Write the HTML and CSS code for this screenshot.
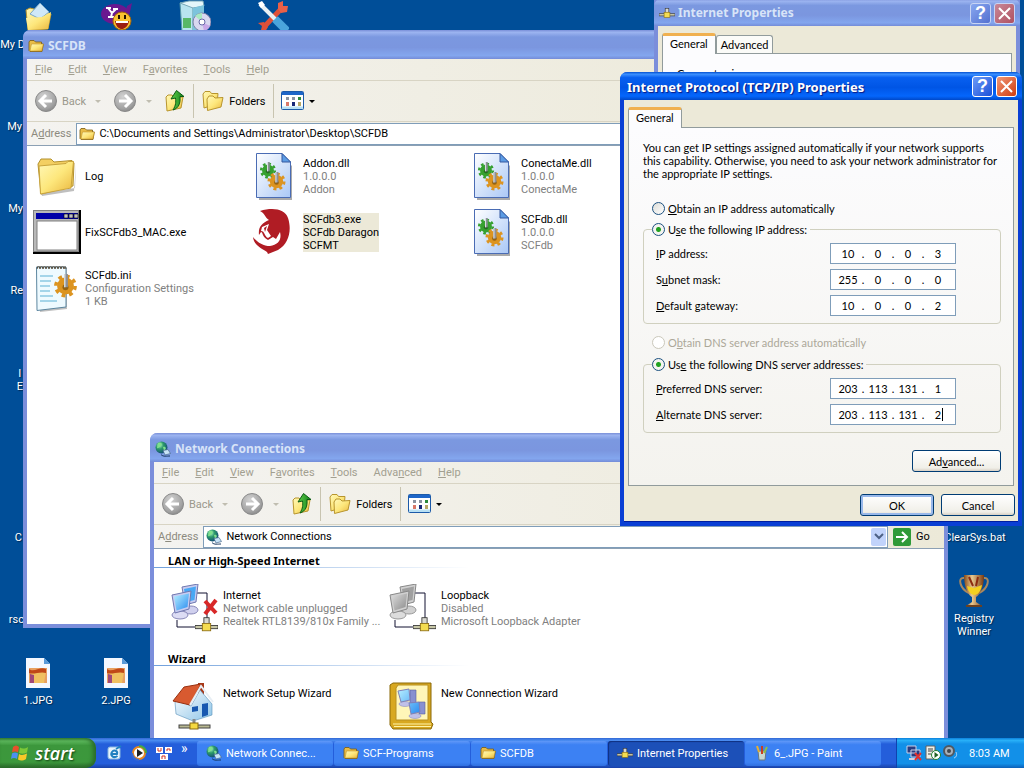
FILE: index.html
```html
<!DOCTYPE html>
<html lang="en">
<head>
    <meta charset="UTF-8">
    <meta name="viewport" content="width=device-width, initial-scale=1.0">
    <title>Desktop</title>
    <link rel="stylesheet" href="styles.css">
</head>
<body>
    <!-- shared icons -->
    <svg class="sprite" width="0" height="0" aria-hidden="true">
        <defs>
            <linearGradient id="gFolder" x1="0" y1="0" x2="1" y2="1">
                <stop offset="0" stop-color="#fff8b8"/>
                <stop offset="0.5" stop-color="#fde77c"/>
                <stop offset="1" stop-color="#e9b53c"/>
            </linearGradient>
            <linearGradient id="gPage" x1="0" y1="0" x2="1" y2="1">
                <stop offset="0" stop-color="#ffffff"/>
                <stop offset="1" stop-color="#aac8f6"/>
            </linearGradient>
            <linearGradient id="gScreen" x1="0" y1="0" x2="1" y2="1">
                <stop offset="0" stop-color="#b8f0ff"/>
                <stop offset="1" stop-color="#2a8cf0"/>
            </linearGradient>
            <linearGradient id="gGrey" x1="0" y1="0" x2="1" y2="1">
                <stop offset="0" stop-color="#dcdcdc"/>
                <stop offset="1" stop-color="#8c8c8c"/>
            </linearGradient>
            <linearGradient id="gUp" x1="0" y1="0" x2="1" y2="0">
                <stop offset="0" stop-color="#5fd04a"/>
                <stop offset="1" stop-color="#14801a"/>
            </linearGradient>
            <linearGradient id="gWall" x1="0" y1="0" x2="1" y2="1">
                <stop offset="0" stop-color="#ffffff"/>
                <stop offset="1" stop-color="#8cc4e8"/>
            </linearGradient>
            <linearGradient id="gCup" x1="0" y1="0" x2="1" y2="0">
                <stop offset="0" stop-color="#8a4b18"/>
                <stop offset="0.4" stop-color="#e8c890"/>
                <stop offset="1" stop-color="#7a3a10"/>
            </linearGradient>
            <radialGradient id="gNav" cx="0.4" cy="0.3" r="0.8">
                <stop offset="0" stop-color="#d2d2d2"/>
                <stop offset="0.7" stop-color="#a2a2a2"/>
                <stop offset="1" stop-color="#808080"/>
            </radialGradient>
            <radialGradient id="gGlobe" cx="0.35" cy="0.3" r="0.8">
                <stop offset="0" stop-color="#a8f0c8"/>
                <stop offset="0.4" stop-color="#2c9a6a"/>
                <stop offset="1" stop-color="#0c3c78"/>
            </radialGradient>

            <symbol id="folder" viewBox="0 0 16 16">
                <path d="M1 4 L2 2.500 H6 L7.500 4 H13.500 V6 H15.300 L14 13.500 H2 L1 12.500Z" fill="#e8bc48" stroke="#7a5a10" stroke-width="0.800"/>
                <path d="M3.500 6 H15.300 L13.800 13 H2Z" fill="url(#gFolder)" stroke="#b88a20" stroke-width="0.500"/>
            </symbol>
            <symbol id="folder-large" viewBox="0 0 48 48">
                <path d="M8 41 L42 36 L43 12 L41 39 L9 44Z" fill="#00000040"/>
                <path d="M5 12 L8 7 L18 7 L21 10 L39 8.500 L41 11 L40 34 L8 42Z" fill="#f3cf62" stroke="#b3912e"/>
                <path d="M6 14 L33 11.500 L35 9.500 L40.500 9.500 L38 36 L7.500 42Z" fill="url(#gFolder)" stroke="#c9a43c"/>
            </symbol>
            <symbol id="folders" viewBox="0 0 24 22">
                <path d="M2 4 L4 1.500 H9 L10.500 3.500 H17 L16 14 L3 18Z" fill="url(#gFolder)" stroke="#b8952e"/>
                <path d="M6 9 L8 6 H12 L14 8 L22 7.500 L20 17 L6.500 20.500Z" fill="url(#gFolder)" stroke="#b8952e"/>
            </symbol>
            <symbol id="up" viewBox="0 0 22 24">
                <path d="M2 8 L4 6 H8 L10 8 L19 8 L17 19 L3 22Z" fill="url(#gFolder)" stroke="#b8952e"/>
                <path d="M12.500 1.500 L20 7.500 H16 C16.500 14 15 19 9 21 C12 16 12 13 11.500 9 L7 10Z" fill="url(#gUp)" stroke="#0c5c14"/>
            </symbol>
            <symbol id="nav-back" viewBox="0 0 24 24">
                <circle cx="12" cy="12" r="10.500" fill="url(#gNav)" stroke="#8a8a8a"/>
                <path d="M12 6 L6 12 L12 18 M6.500 12 H18" fill="none" stroke="#fff" stroke-width="3"/>
            </symbol>
            <symbol id="nav-fwd" viewBox="0 0 24 24">
                <circle cx="12" cy="12" r="10.500" fill="url(#gNav)" stroke="#8a8a8a"/>
                <path d="M12 6 L18 12 L12 18 M17.500 12 H6" fill="none" stroke="#fff" stroke-width="3"/>
            </symbol>
            <symbol id="views" viewBox="0 0 24 20">
                <rect x="0.500" y="0.500" width="22" height="18" rx="1" fill="#fff" stroke="#1c5aa8"/>
                <rect x="1" y="1" width="21" height="3" fill="#1e66c8"/>
                <path d="M1 15.500 H22 V18 H1Z" fill="#b8e0f4"/>
                <path d="M5 6h3v3h-3z M11 6h3v3h-3z" fill="#8a93a0"/>
                <path d="M17 6h3v3h-3z" fill="#2c8a3c"/>
                <path d="M5 11h3v4h-3z" fill="#d87868"/>
                <path d="M11 11h3v4h-3z" fill="#182878"/>
                <path d="M17 11h3v4h-3z" fill="#b8a868"/>
            </symbol>
            <symbol id="globe" viewBox="0 0 16 16">
                <circle cx="6.500" cy="6.500" r="6" fill="url(#gGlobe)"/>
                <path d="M3 2 C6 1 8 3 6 5 C4 6 3 8 2 7Z M8 6 C11 5 12 8 9 10Z" fill="#7fe08c"/>
                <path d="M8 9.500 L13 8.500 L15.500 12.500 L10 14Z" fill="#c8e4f8" stroke="#48688c" stroke-width="0.700"/>
                <path d="M6 13.500 C8 16 12 15 15 15" stroke="#183860" fill="none"/>
            </symbol>
            <symbol id="gear" viewBox="-10 -10 20 20">
                <circle r="5" fill="currentColor" stroke="currentColor" stroke-width="4"/>
                <circle r="8" fill="none" stroke="currentColor" stroke-width="3" stroke-dasharray="3.140 3.140"/>
                <circle cy="1" r="2.500" fill="#00000055"/>
                <path d="M-1.200 -10 H2 V1 H-1.200Z" fill="#8c9098"/>
                <path d="M-1.200 -10 H0 V1 H-1.200Z" fill="#d8dce0"/>
            </symbol>
            <symbol id="dll" viewBox="0 0 48 48">
                <path d="M8 4 H31 L41 14 V48 H8Z" fill="#00000055"/>
                <path d="M5.500 1.500 H31 L39.500 10 V45.500 H5.500Z" fill="url(#gPage)" stroke="#4a6cb4"/>
                <path d="M31 1.500 V10 H39.500Z" fill="#5c9ce4" stroke="#3458a0"/>
                <use href="#gear" x="8" y="10" width="18" height="17" color="#36a030"/>
                <use href="#gear" x="16" y="20" width="19" height="19" color="#dc9420"/>
            </symbol>
            <symbol id="exe" viewBox="0 0 48 44">
                <rect width="48" height="44" fill="#000"/>
                <rect width="46" height="42" fill="#808080"/>
                <rect x="1" y="1" width="44" height="40" fill="#b8b8b8"/>
                <rect x="3" y="3" width="42" height="6" fill="#0000a8"/>
                <path d="M31 4h4v4h-4z M36 4h4v4h-4z M41 4h4v4h-4z" fill="#c0c0c0" stroke="#000" stroke-width="0.600"/>
                <rect x="4" y="11" width="40" height="29" fill="#fff" stroke="#808080"/>
            </symbol>
            <symbol id="ini" viewBox="0 0 48 48">
                <path d="M5 4 H34 V45 L7 48Z" fill="#00000040"/>
                <path d="M3.500 3 H33 V43 L4 46.500Z" fill="#eefaff" stroke="#5c86a0"/>
                <path d="M4 5 q1.500 -6 3 0 q1.500 -6 3 0 q1.500 -6 3 0 q1.500 -6 3 0 q1.500 -6 3 0 q1.500 -6 3 0 q1.500 -6 3 0 q1.500 -6 3 0 q1.500 -6 3 0 q1 -5 2 0" fill="none" stroke="#5a5040"/>
                <path d="M7 12h13 M7 17h11 M7 22h10 M7 27h10 M7 32h13 M7 37h17" stroke="#5ab0d4"/>
                <use href="#gear" x="19" y="10" width="27" height="24" color="#dc9420"/>
            </symbol>
            <symbol id="dragon" viewBox="0 0 48 48">
                <path d="M9 3 C22 -1 34 1 37 10 C41 22 38 36 27 42 L17 46 L16 44 C12 41 3 38 2 29 C6 34 12 38 19 38 C27 37 31 32 29 24 L25 31 L22 29 L17 32 C11 29 12 24 10 24 L8 27 C7 19 11 15 18 12 C14 10 14 5 9 3Z" fill="#b01c24"/>
                <path d="M11 19 L18 16 L16 22 L20 28 L17 30 C13 28 14 23 10 23Z" fill="#fff"/>
                <path d="M13 20 L16 18 L14 24Z" fill="#b01c24"/>
            </symbol>
            <symbol id="plug" viewBox="0 0 22 14">
                <rect x="0" y="8" width="22" height="3" fill="#c8c8a8" stroke="#303030" stroke-width="0.800"/>
                <rect x="8.500" y="0.500" width="5" height="7" fill="#d8d8d0" stroke="#303030" stroke-width="0.800"/>
                <rect x="7" y="6" width="8" height="7" fill="#f4dc50" stroke="#8a6a10" stroke-width="0.800"/>
            </symbol>
            <symbol id="pcs" viewBox="0 0 48 48">
                <path d="M26 9 H36 V36 M6 36 V43 H26" fill="none" stroke="#101030"/>
                <ellipse cx="20" cy="26" rx="7" ry="4" fill="#d0d0ee" stroke="#8888b8"/>
                <path d="M11 3 L27 0 L25 18 L14 21Z" fill="#c8ccf0" stroke="#7078b0"/>
                <path d="M13 5 L25 2.500 L23.500 16 L15 18Z" fill="#48a8f4"/>
                <ellipse cx="9" cy="31" rx="8" ry="4" fill="#dcdcf4" stroke="#8888b8"/>
                <path d="M1 11 L20 7 L18 25 L4 29Z" fill="#c8ccf0" stroke="#7078b0"/>
                <path d="M3 12.500 L18 9.500 L16.500 23 L5.500 26.500Z" fill="url(#gScreen)"/>
                <use href="#plug" x="24" y="33" width="23" height="15"/>
            </symbol>
            <symbol id="pcs-off" viewBox="0 0 48 48">
                <path d="M26 9 H36 V36 M6 36 V43 H26" fill="none" stroke="#101030"/>
                <ellipse cx="20" cy="26" rx="7" ry="4" fill="#d0d0d0" stroke="#999"/>
                <path d="M11 3 L27 0 L25 18 L14 21Z" fill="#d0d0d0" stroke="#888"/>
                <path d="M13 5 L25 2.500 L23.500 16 L15 18Z" fill="#a0a0a0"/>
                <ellipse cx="9" cy="31" rx="8" ry="4" fill="#dcdcdc" stroke="#999"/>
                <path d="M1 11 L20 7 L18 25 L4 29Z" fill="#d0d0d0" stroke="#888"/>
                <path d="M3 12.500 L18 9.500 L16.500 23 L5.500 26.500Z" fill="url(#gGrey)"/>
                <use href="#plug" x="24" y="33" width="23" height="15"/>
            </symbol>
            <symbol id="house" viewBox="0 0 48 48">
                <path d="M27 1 h6 v12 h-6z" fill="#a83818"/>
                <path d="M4 20 L7 18 L20 24 L29 8 L41 22 V33 L22 39 L5 32Z" fill="url(#gWall)" stroke="#5890b8" stroke-width="0.600"/>
                <path d="M2 19 L13 5 L30 2 L19 23Z" fill="#d85a30" stroke="#983010"/>
                <path d="M19 23 L30 4 L42 20" fill="none" stroke="#e8eef4" stroke-width="2"/>
                <path d="M31 22 l6 -1 v12 l-6 2z M21 25 l6 -1 v5 l-6 1z" fill="#1858b0"/>
                <path d="M23 37 v6" stroke="#888" stroke-width="3"/>
                <rect x="8" y="43" width="31" height="3" fill="#b8b890" stroke="#444"/>
                <rect x="19" y="41" width="8" height="6" fill="#f4d840" stroke="#8a6a10"/>
            </symbol>
            <symbol id="book" viewBox="0 0 48 48">
                <path d="M1 3 L4 1 H42 V40 L44 42 L42 47 H4 L1 43Z" fill="#d8a820" stroke="#8a6808"/>
                <path d="M7 6 L9 3 H39 V38 H7Z" fill="#fff6b8" stroke="#b89020"/>
                <path d="M4 42 H42 M5 44.500 H42" stroke="#fff4a8"/>
                <path d="M21 8 h6 v13 h-6z M30 20 h6 v12 h-6z" fill="#8890d0" stroke="#5860a0" stroke-width="0.600"/>
                <ellipse cx="16" cy="22" rx="6" ry="2.500" fill="#c0c0e8" stroke="#8080b8" stroke-width="0.500"/>
                <ellipse cx="26" cy="34" rx="6" ry="2.500" fill="#c0c0e8" stroke="#8080b8" stroke-width="0.500"/>
                <path d="M9 9 L20 7 L21 18 L12 20Z M20 21 L30 20 L31 30 L22 32Z" fill="url(#gScreen)" stroke="#8080b8"/>
            </symbol>
            <symbol id="jpg" viewBox="0 0 24 30">
                <path d="M0 0 H18 L24 6 V30 H0Z" fill="#f4f8ff"/>
                <path d="M18 0 V6 H24Z" fill="#5a9ad8"/>
                <path d="M3 10 H21 V25 H3Z" fill="#e8a060"/>
                <path d="M4 13 H20 L18 25 H7Z" fill="#f0c060"/>
                <path d="M3 11 C8 15 14 8 20 11 V15 C14 13 8 17 3 15Z" fill="#c04818"/>
                <path d="M4 16 L8 17 V25 H4Z" fill="#a04878"/>
            </symbol>
        </defs>
    </svg>

    <div class="desktop">
        <!-- desktop shortcuts -->
        <div class="shortcut mydocs">
            <svg width="32" height="32" viewBox="0 0 32 32"><path d="M4 10 L8 8 L24 12 L29 14 L26 29 L6 30Z" fill="url(#gFolder)" stroke="#b8952e"/><path d="M8 14 L18 3 L27 12 L18 19Z" fill="#cfe8f8" stroke="#7aa8c8"/><path d="M4 18 L20 17 L29 12 L26 29 L6 30Z" fill="url(#gFolder)"/></svg>
        </div>
        <div class="shortcut edge docs"><span>My D</span></div>
        <div class="shortcut edge mycomp"><span>My</span></div>
        <div class="shortcut edge mynet"><span>My</span></div>
        <div class="shortcut edge bin"><span>Re</span></div>
        <div class="shortcut edge ie"><span>I<br>E</span></div>
        <div class="shortcut edge cc"><span>C</span></div>
        <div class="shortcut edge rsc"><span>rsc</span></div>
        <div class="shortcut yahoo">
            <svg width="32" height="32" viewBox="0 0 32 32"><ellipse cx="14" cy="14" rx="14" ry="10" fill="#6a1890"/><path d="M26 6 L31 3 L28 16 L24 14Z" fill="#6a1890"/><path d="M5 8 H10 M12 9 H17 M7 8 L11 13 L15 9 M11 13 L10 17 M7 17 H13" stroke="#fff" stroke-width="2" fill="none"/><circle cx="21" cy="21" r="9" fill="#f8c030" stroke="#a86808"/><path d="M14 21 H28 C27 27 23 29 21 29 C18 29 15 27 14 21Z" fill="#9c1c10"/><path d="M15 21 H27 V23 H15Z" fill="#fff"/><path d="M18 15 V19 M24 15 V19" stroke="#201000" stroke-width="2"/></svg>
        </div>
        <div class="shortcut setup">
            <svg width="32" height="32" viewBox="0 0 32 32"><path d="M1 3 L14 6 V32 H3Z" fill="#b8e4f0" stroke="#5898a8"/><path d="M1 3 L10 1 L24 1 L25 6 L14 8Z" fill="#e4f6fa" stroke="#78a8b8"/><path d="M14 8 L25 5 V32 H14Z" fill="#7cc4dc"/><path d="M4 18 h8 v10 h-8z" fill="#58b868"/><circle cx="23" cy="22" r="9" fill="#d8d8f0" stroke="#8080a8"/><path d="M23 22 L16 16 A9 9 0 0 1 23 13Z" fill="#a8e8c0"/><path d="M23 22 L31 26 A9 9 0 0 1 25 31Z" fill="#c8a8e8"/><circle cx="23" cy="22" r="3" fill="#fff" stroke="#6868a8"/></svg>
        </div>
        <div class="shortcut tools">
            <svg width="32" height="32" viewBox="0 0 32 32"><path d="M24 9 L7 27" stroke="#e05038" stroke-width="5"/><path d="M21 9 L21 3 L26 1 L26 6 L31 6 L30 12 L24 13Z" fill="#e86048"/><path d="M1 23 L7 22 L11 27 L8 32 L4 30 L5 26Z" fill="#e05038"/><path d="M3 4 L19 20" stroke="#e8f0f4" stroke-width="4"/><path d="M18 19 L30 31" stroke="#4aa4dc" stroke-width="8"/><path d="M1 3 L5 1 L8 5 L4 8Z" fill="#fff"/></svg>
        </div>
        <div class="shortcut jpg1"><svg width="24" height="30"><use href="#jpg"/></svg><span>1.JPG</span></div>
        <div class="shortcut jpg2"><svg width="24" height="30"><use href="#jpg"/></svg><span>2.JPG</span></div>
        <div class="shortcut clearsys"><span>ClearSys.bat</span></div>
        <div class="shortcut winner">
            <svg width="32" height="34" viewBox="0 0 32 34"><path d="M6 4 C-1 3 2 15 11 19 M26 4 C33 3 30 15 21 19" fill="none" stroke="#a88860" stroke-width="2"/><path d="M6 1 H26 C26 13 22 21 18 23 V28 L24 32 H8 L14 28 V23 C10 21 6 13 6 1Z" fill="url(#gCup)"/><path d="M9 12 L16 14 L24 11 C23 17 20 21 16 21 C12 20 10 17 9 12Z" fill="#f4d020"/><path d="M11 3 L15 12 M20 3 L18 12" stroke="#8c2c10" stroke-width="2"/><path d="M8 31 H24 V33 H8Z" fill="#6a4020"/></svg>
            <span>Registry Winner</span>
        </div>

        <!-- SCFDB folder -->
        <section class="window explorer scfdb">
            <header class="titlebar">
                <svg width="16" height="16"><use href="#folder"/></svg>
                <h2>SCFDB</h2>
            </header>
            <nav class="menubar">
                <button><u>F</u>ile</button>
                <button><u>E</u>dit</button>
                <button><u>V</u>iew</button>
                <button>F<u>a</u>vorites</button>
                <button><u>T</u>ools</button>
                <button><u>H</u>elp</button>
            </nav>
            <div class="toolbar">
                <button class="tool nav" disabled><svg width="24" height="24"><use href="#nav-back"/></svg>Back<i class="caret"></i></button>
                <button class="tool nav" disabled aria-label="Forward"><svg width="24" height="24"><use href="#nav-fwd"/></svg><i class="caret"></i></button>
                <button class="tool" aria-label="Up"><svg width="22" height="24"><use href="#up"/></svg></button>
                <span class="sep"></span>
                <button class="tool"><svg width="24" height="22"><use href="#folders"/></svg>Folders</button>
                <span class="sep"></span>
                <button class="tool views" aria-label="Views"><svg width="24" height="20"><use href="#views"/></svg><i class="caret"></i></button>
            </div>
            <div class="addressbar">
                <label for="addr1">A<u>d</u>dress</label>
                <div class="combo">
                    <svg width="16" height="16"><use href="#folder"/></svg>
                    <input type="text" id="addr1" value="C:\Documents and Settings\Administrator\Desktop\SCFDB">
                </div>
            </div>
            <div class="tiles">
                <div class="tile"><svg width="48" height="48"><use href="#folder-large"/></svg><p>Log</p></div>
                <div class="tile"><svg width="48" height="48"><use href="#dll"/></svg><p>Addon.dll<small>1.0.0.0</small><small>Addon</small></p></div>
                <div class="tile"><svg width="48" height="48"><use href="#dll"/></svg><p>ConectaMe.dll<small>1.0.0.0</small><small>ConectaMe</small></p></div>
                <div class="tile"><svg width="48" height="48"><use href="#exe"/></svg><p>FixSCFdb3_MAC.exe</p></div>
                <div class="tile selected"><svg width="48" height="48"><use href="#dragon"/></svg><p>SCFdb3.exe<small>SCFdb Daragon</small><small>SCFMT</small></p></div>
                <div class="tile"><svg width="48" height="48"><use href="#dll"/></svg><p>SCFdb.dll<small>1.0.0.0</small><small>SCFdb</small></p></div>
                <div class="tile"><svg width="48" height="48"><use href="#ini"/></svg><p>SCFdb.ini<small>Configuration Settings</small><small>1 KB</small></p></div>
            </div>
        </section>

        <!-- Network Connections -->
        <section class="window explorer netconn">
            <header class="titlebar">
                <svg width="16" height="16"><use href="#globe"/></svg>
                <h2>Network Connections</h2>
            </header>
            <nav class="menubar">
                <button><u>F</u>ile</button>
                <button><u>E</u>dit</button>
                <button><u>V</u>iew</button>
                <button>F<u>a</u>vorites</button>
                <button><u>T</u>ools</button>
                <button>Adva<u>n</u>ced</button>
                <button><u>H</u>elp</button>
            </nav>
            <div class="toolbar">
                <button class="tool nav" disabled><svg width="24" height="24"><use href="#nav-back"/></svg>Back<i class="caret"></i></button>
                <button class="tool nav" disabled aria-label="Forward"><svg width="24" height="24"><use href="#nav-fwd"/></svg><i class="caret"></i></button>
                <button class="tool" aria-label="Up"><svg width="22" height="24"><use href="#up"/></svg></button>
                <span class="sep"></span>
                <button class="tool"><svg width="24" height="22"><use href="#folders"/></svg>Folders</button>
                <span class="sep"></span>
                <button class="tool views" aria-label="Views"><svg width="24" height="20"><use href="#views"/></svg><i class="caret"></i></button>
            </div>
            <div class="addressbar">
                <label for="addr2">A<u>d</u>dress</label>
                <div class="combo">
                    <svg width="16" height="16"><use href="#globe"/></svg>
                    <input type="text" id="addr2" value="Network Connections">
                    <button class="drop" aria-label="Show addresses"><svg width="10" height="7" viewBox="0 0 10 7"><path d="M1 1 L5 5 L9 1" fill="none" stroke="#4d6185" stroke-width="2"/></svg></button>
                </div>
                <button class="go"><svg width="18" height="18" viewBox="0 0 18 18"><rect width="18" height="18" rx="2" fill="#2f9a38"/><path d="M3 9 H14 M9 4 L14 9 L9 14" fill="none" stroke="#fff" stroke-width="2"/></svg>Go</button>
            </div>
            <h3>LAN or High-Speed Internet</h3>
            <div class="tiles">
                <div class="tile">
                    <svg width="48" height="48" viewBox="0 0 48 48"><use href="#pcs"/><path d="M34 17 L45 29 M45 16 L34 30" stroke="#d82828" stroke-width="4"/></svg>
                    <p>Internet<small>Network cable unplugged</small><small>Realtek RTL8139/810x Family ...</small></p>
                </div>
                <div class="tile"><svg width="48" height="48"><use href="#pcs-off"/></svg><p>Loopback<small>Disabled</small><small>Microsoft Loopback Adapter</small></p></div>
            </div>
            <h3>Wizard</h3>
            <div class="tiles">
                <div class="tile"><svg width="48" height="48"><use href="#house"/></svg><p>Network Setup Wizard</p></div>
                <div class="tile"><svg width="48" height="48"><use href="#book"/></svg><p>New Connection Wizard</p></div>
            </div>
        </section>

        <!-- Internet Properties -->
        <section class="window dialog inetprops">
            <header class="titlebar">
                <svg width="16" height="14"><use href="#plug"/></svg>
                <h2>Internet Properties</h2>
                <button class="help" aria-label="Help">?</button>
                <button class="close" aria-label="Close"><svg width="13" height="13" viewBox="0 0 13 13"><path d="M1 1 L12 12 M12 1 L1 12" stroke="#fff" stroke-width="2"/></svg></button>
            </header>
            <div class="tabs">
                <button class="tab active">General</button>
                <button class="tab">Advanced</button>
            </div>
            <div class="panel">
                <p>Connect using:</p>
            </div>
        </section>

        <!-- TCP/IP Properties -->
        <section class="window dialog focused tcpip">
            <header class="titlebar">
                <h2>Internet Protocol (TCP/IP) Properties</h2>
                <button class="help" aria-label="Help">?</button>
                <button class="close" aria-label="Close"><svg width="13" height="13" viewBox="0 0 13 13"><path d="M1 1 L12 12 M12 1 L1 12" stroke="#fff" stroke-width="2"/></svg></button>
            </header>
            <form id="tcpip-form">
                <div class="tabs">
                    <button type="button" class="tab active">General</button>
                </div>
                <div class="panel">
                    <p>You can get IP settings assigned automatically if your network supports this capability. Otherwise, you need to ask your network administrator for the appropriate IP settings.</p>
                    <div class="option">
                        <input type="radio" name="ip" id="ip-auto"><label for="ip-auto"><u>O</u>btain an IP address automatically</label>
                    </div>
                    <fieldset>
                        <legend class="option"><input type="radio" name="ip" id="ip-manual" checked><label for="ip-manual">U<u>s</u>e the following IP address:</label></legend>
                        <div class="field">
                            <label for="ip1"><u>I</u>P address:</label>
                            <div class="octets"><input id="ip1" value="10"><span>.</span><input aria-label="IP 2" value="0"><span>.</span><input aria-label="IP 3" value="0"><span>.</span><input aria-label="IP 4" value="3"></div>
                        </div>
                        <div class="field">
                            <label for="mask1">S<u>u</u>bnet mask:</label>
                            <div class="octets"><input id="mask1" value="255"><span>.</span><input aria-label="Mask 2" value="0"><span>.</span><input aria-label="Mask 3" value="0"><span>.</span><input aria-label="Mask 4" value="0"></div>
                        </div>
                        <div class="field">
                            <label for="gw1"><u>D</u>efault gateway:</label>
                            <div class="octets"><input id="gw1" value="10"><span>.</span><input aria-label="Gateway 2" value="0"><span>.</span><input aria-label="Gateway 3" value="0"><span>.</span><input aria-label="Gateway 4" value="2"></div>
                        </div>
                    </fieldset>
                    <div class="option off">
                        <input type="radio" name="dns" id="dns-auto" disabled><label for="dns-auto">O<u>b</u>tain DNS server address automatically</label>
                    </div>
                    <fieldset>
                        <legend class="option"><input type="radio" name="dns" id="dns-manual" checked><label for="dns-manual">Us<u>e</u> the following DNS server addresses:</label></legend>
                        <div class="field">
                            <label for="dns1"><u>P</u>referred DNS server:</label>
                            <div class="octets"><input id="dns1" value="203"><span>.</span><input aria-label="Preferred 2" value="113"><span>.</span><input aria-label="Preferred 3" value="131"><span>.</span><input aria-label="Preferred 4" value="1"></div>
                        </div>
                        <div class="field">
                            <label for="alt1"><u>A</u>lternate DNS server:</label>
                            <div class="octets editing"><input id="alt1" value="203"><span>.</span><input aria-label="Alternate 2" value="113"><span>.</span><input aria-label="Alternate 3" value="131"><span>.</span><input aria-label="Alternate 4" value="2"></div>
                        </div>
                    </fieldset>
                    <button type="button" class="btn advanced">Ad<u>v</u>anced...</button>
                </div>
                <div class="actions">
                    <button type="submit" class="btn default">OK</button>
                    <button type="button" class="btn">Cancel</button>
                </div>
            </form>
        </section>

        <footer class="taskbar">
            <button class="start">
                <svg width="20" height="20" viewBox="0 0 20 20"><path d="M3 4 C5 2 7 2 9 4 L8 9.500 C6 8 4 8 2 9.500Z" fill="#e8502c"/><path d="M10 4.500 C12 6 15 6 18 4 L17 9.500 C14 11 12 11 9 10Z" fill="#7cc838"/><path d="M2 10.500 C4 9 6 9 8 10.500 L7 16 C5 14.500 3 14.500 1 16Z" fill="#4c90f0"/><path d="M9 11 C11 12.500 14 12 17 10.500 L16 16 C13 18 10 18 8 16.500Z" fill="#f8c828"/></svg>
                start
            </button>
            <div class="quick">
                <svg width="16" height="16" viewBox="0 0 16 16"><rect x="1" y="2" width="12" height="12" rx="2" fill="#e8f4fc" stroke="#88b8e0"/><path d="M10.500 11 C6 14 3 10 5 7 C7 4 11 6 10 9 H4.500 M9 4 L14 1" stroke="#2080c0" stroke-width="2" fill="none"/></svg>
                <svg width="16" height="16" viewBox="0 0 16 16"><circle cx="8" cy="8" r="6" fill="#fff" stroke="#e88820" stroke-width="2"/><path d="M8 1 A7 7 0 0 1 15 8" stroke="#48a840" stroke-width="2" fill="none"/><path d="M1 8 A7 7 0 0 0 8 15" stroke="#3868d0" stroke-width="2" fill="none"/><path d="M6 4 L12 8 L6 12Z" fill="#202020"/></svg>
                <svg width="18" height="16" viewBox="0 0 18 16"><path d="M1 2h7v6h-7z M10 2h7v6h-7z M5 9h8v6h-8z" fill="#fff"/><path d="M3 3v3h3v-3 M12 6v-2h3v2 M7 14v-3h3v3" stroke="#d03020" fill="none"/></svg>
                <b>»</b>
            </div>
            <div class="tasks">
                <button class="task"><svg width="16" height="16"><use href="#globe"/></svg>Network Connec...</button>
                <button class="task"><svg width="16" height="16"><use href="#folder"/></svg>SCF-Programs</button>
                <button class="task"><svg width="16" height="16"><use href="#folder"/></svg>SCFDB</button>
                <button class="task current"><svg width="16" height="14"><use href="#plug"/></svg>Internet Properties</button>
                <button class="task"><svg width="16" height="16" viewBox="0 0 16 16"><path d="M4 6 H12 L11 15 H5Z" fill="#c8d8d0" stroke="#687880"/><path d="M5 7 L3 1" stroke="#e8b030" stroke-width="2"/><path d="M8 9 V1" stroke="#c84020" stroke-width="2"/><path d="M10 8 L13 2" stroke="#90c048" stroke-width="2"/></svg>6_.JPG - Paint</button>
            </div>
            <div class="tray">
                <svg width="17" height="16" viewBox="0 0 17 16"><path d="M1 1h9v7h-9z M5 5h9v7h-9z" fill="#283c80" stroke="#c8d0e8"/><path d="M3 14 H11" stroke="#d0d0e0" stroke-width="2"/><path d="M9 8 L15 15 M15 8 L9 15" stroke="#e03030" stroke-width="2"/></svg>
                <svg width="16" height="16" viewBox="0 0 16 16"><path d="M1 1h9v13h-9z" fill="#f0f0e8" stroke="#606060"/><path d="M3 4h5M3 6h5M3 9h3" stroke="#404040"/><circle cx="11" cy="10" r="4.500" fill="#fff" stroke="#208030"/><path d="M9.500 7 L13.500 10 L9.500 13Z" fill="#206020"/></svg>
                <svg width="16" height="16" viewBox="0 0 16 16"><circle cx="6" cy="6" r="5" fill="#a8b0b8" stroke="#505860" stroke-width="2"/><circle cx="6" cy="6" r="2" fill="#404850"/><path d="M11 13 C14 12 14 9 13 7" fill="none" stroke="#b8d8f8"/></svg>
                <time>8:03 AM</time>
            </div>
        </footer>
    </div>
    <script>
        document.getElementById('tcpip-form').addEventListener('submit', function(event) {
            event.preventDefault();
        });
    </script>
</body>
</html>
```
FILE: styles.css
```css
* {
    box-sizing: border-box;
}
body {
    margin: 0;
    font-family: Roboto, Tahoma, sans-serif;
    font-size: 11px;
    line-height: 13px;
    color: #000;
}
button, input {
    font: inherit;
    color: inherit;
}
button {
    border: 0;
    padding: 0;
    background: none;
}
svg {
    flex: none;
    display: block;
}
h2, h3, p {
    margin: 0;
}
.sprite {
    position: absolute;
}
.desktop {
    position: relative;
    height: 100vh;
    overflow: hidden;
    background-color: #004e98;
}

/* desktop shortcuts */
.shortcut {
    position: absolute;
    width: 74px;
    display: flex;
    flex-direction: column;
    align-items: center;
    gap: 6px;
    text-align: center;
    color: #fff;
    text-shadow: 1px 1px 1px #002850;
}
.edge {
    width: 22px;
    align-items: flex-end;
    white-space: nowrap;
}
.mydocs { left: 1px; top: 0; }
.docs { left: 3px; top: 38px; }
.mycomp { left: 0; top: 120px; }
.mynet { left: 1px; top: 202px; }
.bin { left: 1px; top: 284px; }
.ie { left: 1px; top: 367px; }
.cc { left: 0; top: 531px; }
.rsc { left: 2px; top: 613px; }
.yahoo { left: 80px; top: 0; }
.setup { left: 158px; top: 0; }
.tools { left: 236px; top: 0; }
.jpg1 { left: 1px; top: 658px; }
.jpg2 { left: 79px; top: 658px; }
.clearsys { left: 938px; top: 531px; }
.winner { left: 937px; top: 574px; gap: 4px; }
.winner span { width: 50px; }

/* windows */
.window {
    position: absolute;
    display: flex;
    flex-direction: column;
    border: 4px solid #7b8edb;
    border-top: 0;
    border-radius: 8px 8px 0 0;
    background-color: #ece9d8;
}
.titlebar {
    flex: none;
    display: flex;
    align-items: center;
    gap: 4px;
    margin: 0 -4px;
    padding: 2px 5px 0;
    height: 29px;
    border-radius: 7px 7px 0 0;
    color: #d8e4f8;
    background: linear-gradient(#7a8fd8 0, #9cb4f0 8%, #7b98e0 24%, #7b96df 60%, #83a6ee 88%, #748cd8 100%);
}
.titlebar h2 {
    flex: 1;
    font-family: "Noto Sans", Tahoma, sans-serif;
    font-size: 12px;
    line-height: 16px;
    white-space: nowrap;
}
.scfdb {
    left: 23px;
    top: 30px;
    width: 800px;
    height: 598px;
}
.netconn {
    left: 150px;
    right: 76px;
    top: 433px;
    background-color: #fff;
}

/* explorer bars */
.menubar, .toolbar, .addressbar {
    flex: none;
    display: flex;
    align-items: center;
    background: linear-gradient(90deg, #f4f3f0, #ece9d8);
}
.menubar {
    height: 22px;
    gap: 16px;
    padding: 0 8px;
    color: #a29f90;
    border-bottom: 1px solid #d8d4c4;
}
.toolbar {
    height: 41px;
    padding: 0 7px;
    border-bottom: 1px solid #d8d4c4;
}
.tool {
    display: flex;
    align-items: center;
    gap: 4px;
}
.tool:disabled {
    color: #9a988c;
}
.nav {
    margin-right: 12px;
}
.nav .caret {
    margin-left: 5px;
    border-top-color: #c0bdb0;
}
.caret {
    border: 3px solid transparent;
    border-top-color: #000;
    border-bottom: 0;
}
.sep {
    width: 1px;
    height: 34px;
    margin: 0 7px;
    background-color: #c8c4b0;
}
.addressbar {
    height: 24px;
    gap: 5px;
    padding-left: 4px;
    color: #8c8a7e;
    border-bottom: 1px solid #8ca0b4;
}
.combo {
    flex: 1;
    display: flex;
    align-items: center;
    gap: 4px;
    height: 22px;
    padding-left: 2px;
    border: 1px solid #7f9db9;
    background-color: #fff;
    color: #000;
}
.combo input {
    flex: 1;
    border: 0;
    padding: 0;
    outline: 0;
}
.drop {
    display: flex;
    align-items: center;
    justify-content: center;
    width: 15px;
    height: 18px;
    margin-right: 1px;
    border-radius: 2px;
    background-color: #c1d3fb;
}
.go {
    display: flex;
    align-items: center;
    gap: 5px;
    width: 51px;
    color: #000;
}
.tiles {
    display: grid;
    grid-template-columns: repeat(3, 218px);
    grid-auto-rows: 56px;
    padding-left: 6px;
    background-color: #fff;
}
.scfdb .tiles {
    flex: 1;
    padding-top: 2px;
}
.tile {
    display: flex;
    align-items: center;
    gap: 4px;
    white-space: nowrap;
}
.tile small {
    display: block;
    font-size: 11px;
    color: #808080;
}
.tile.selected p {
    background-color: #ece9d8;
}
.tile.selected small {
    color: #000;
}
.netconn h3 {
    padding: 5px 0 0 14px;
    font-family: "Noto Sans", Tahoma, sans-serif;
    font-size: 11px;
    line-height: 13px;
    border-bottom: 1px solid;
    border-image: linear-gradient(90deg, #70a0dc, #ffffff 40%) 1;
}
.netconn .tiles {
    padding: 12px 0 11px 17px;
}
.netconn .tile p {
    min-height: 39px;
}

/* dialogs */
.dialog {
    font-family: Lato, Arial, sans-serif;
}
.dialog .titlebar {
    gap: 3px;
    height: 27px;
    padding-top: 1px;
}
.inetprops {
    top: -1px;
    right: 4px;
    width: 366px;
    height: 200px;
    border-radius: 0;
}
.tcpip {
    top: 72px;
    right: 2px;
    width: 402px;
}
.focused {
    border-color: #0a3fd4;
    box-shadow: inset 0 -1px 0 #001ea0;
}
.dialog.focused .titlebar {
    height: 28px;
    padding: 1px 5px 0 7px;
    color: #fff;
    text-shadow: 1px 1px 1px #0a1883;
    background: linear-gradient(#0450d0 0, #3c90ff 8%, #0860f0 20%, #0055e5 55%, #0466fc 86%, #0048c8 100%);
}
.focused h2 {
    font-size: 13px;
}
.help, .close {
    display: flex;
    align-items: center;
    justify-content: center;
    width: 21px;
    height: 21px;
    border: 1px solid #c8d4f4;
    border-radius: 3px;
    color: #fff;
    background: linear-gradient(135deg, #88a8f0, #5470d0);
    font-family: "Liberation Sans", Arial, sans-serif;
    font-size: 18px;
    font-weight: bold;
}
.close {
    background: linear-gradient(135deg, #c88898, #b05060);
}
.focused .help {
    border-color: #fff;
    background: linear-gradient(135deg, #6c9cf8, #1c50d8);
}
.focused .close {
    border-color: #fff;
    background: linear-gradient(135deg, #f09878, #d03c10);
}
.tabs {
    display: flex;
    align-items: flex-end;
    padding: 7px 4px 0;
}
.tab {
    height: 18px;
    padding: 0 4px;
    border: 1px solid #919b9c;
    border-bottom: 0;
    border-radius: 3px 3px 0 0;
    background-color: #fbfbf8;
}
.tab.active {
    position: relative;
    height: 21px;
    margin-bottom: -1px;
    padding: 0 7px 4px;
    border-top: 3px solid #f0b050;
    background-color: #fcfcfe;
}
.panel {
    margin: 0 4px;
    padding: 13px 12px 13px 14px;
    border: 1px solid #919b9c;
    background: linear-gradient(#fcfcfe, #f4f3ee);
}
.inetprops .panel {
    flex: 1;
    background: #fcfcfe;
}
.option {
    display: flex;
    align-items: center;
    gap: 3px;
    height: 14px;
    padding: 0 9px;
}
.panel p + .option {
    margin: 21px 0 7px;
}
.off {
    margin: 11px 0 8px;
    color: #aca899;
}
legend.option {
    margin-left: -4px;
    padding: 0 3px 0 0;
}
input[type="radio"] {
    appearance: none;
    width: 13px;
    height: 13px;
    margin: 0;
    border: 1px solid #1c5180;
    border-radius: 50%;
    background: linear-gradient(135deg, #dcdcd7, #ffffff);
}
input[type="radio"]:checked {
    background: radial-gradient(circle, #21a121 0, #21a121 2px, #f4f4f0 3px);
}
input[type="radio"]:disabled {
    border-color: #cac8bb;
    background: #fff;
}
fieldset {
    display: flex;
    flex-direction: column;
    gap: 5px;
    margin: 0;
    padding: 7px 44px 7px 12px;
    border: 1px solid #d0d0bf;
    border-radius: 4px;
}
.field {
    display: flex;
    align-items: center;
    justify-content: space-between;
}
.octets {
    display: flex;
    align-items: center;
    height: 21px;
    padding: 0 6px;
    border: 1px solid #7f9db9;
    background-color: #fff;
}
.octets input {
    width: 22px;
    height: 13px;
    border: 0;
    padding: 0;
    outline: 0;
    text-align: center;
    background: none;
}
.octets span {
    width: 8px;
    text-align: center;
}
.editing input:last-child {
    background: linear-gradient(#000, #000) 15px 0 / 1px 13px no-repeat;
}
.btn {
    min-width: 74px;
    height: 22px;
    padding: 0 14px;
    border: 1px solid #003c74;
    border-radius: 3px;
    background: linear-gradient(#ffffff, #f0efe8 85%, #d8d0c4);
}
.btn.default {
    box-shadow: inset 0 0 0 2px #98b8ea;
}
.advanced {
    display: block;
    min-width: 89px;
    margin: 17px 0 0 auto;
}
.actions {
    display: flex;
    justify-content: flex-end;
    gap: 7px;
    padding: 8px 3px 6px;
}

/* taskbar */
.taskbar {
    position: absolute;
    left: 0;
    right: 0;
    bottom: 0;
    display: flex;
    align-items: center;
    height: 30px;
    color: #fff;
    background: linear-gradient(#3168d5 0, #4a8cf0 8%, #245edb 20%, #245edb 85%, #1941a5 100%);
}
.start {
    display: flex;
    align-items: center;
    gap: 5px;
    width: 96px;
    height: 100%;
    padding-left: 10px;
    border-radius: 0 10px 10px 0;
    background: linear-gradient(#3a8a3a 0, #5cb85c 10%, #3c973c 25%, #3c983c 80%, #2a6a2a 100%);
    box-shadow: inset -3px 0 4px #2a6a2a;
    font-family: "Open Sans", sans-serif;
    font-size: 18px;
    font-weight: 600;
    font-style: italic;
    text-shadow: 1px 1px 2px #104010;
}
.quick {
    display: flex;
    align-items: center;
    gap: 8px;
    width: 101px;
    padding-left: 11px;
}
.quick b {
    margin-bottom: 9px;
    font-size: 14px;
    font-weight: normal;
}
.tasks {
    flex: 1;
    display: flex;
    gap: 1px;
}
.task {
    display: flex;
    align-items: center;
    gap: 4px;
    flex: 0 1 136px;
    height: 25px;
    padding-left: 9px;
    border-radius: 3px;
    white-space: nowrap;
    background: linear-gradient(#6098f8 0, #3c81f3 15%, #3c81f3 85%, #3070e0 100%);
}
.task.current {
    background: #1c50b8;
    box-shadow: inset 1px 1px 1px #103080;
}
.tray {
    display: flex;
    align-items: center;
    gap: 2px;
    width: 128px;
    height: 100%;
    padding-left: 9px;
    border-left: 1px solid #1042af;
    background: linear-gradient(#0c80dc 0, #28b0f8 8%, #1290e8 20%, #1290e8 85%, #0c60b8 100%);
}
.tray time {
    margin-left: 8px;
    white-space: nowrap;
}
```
